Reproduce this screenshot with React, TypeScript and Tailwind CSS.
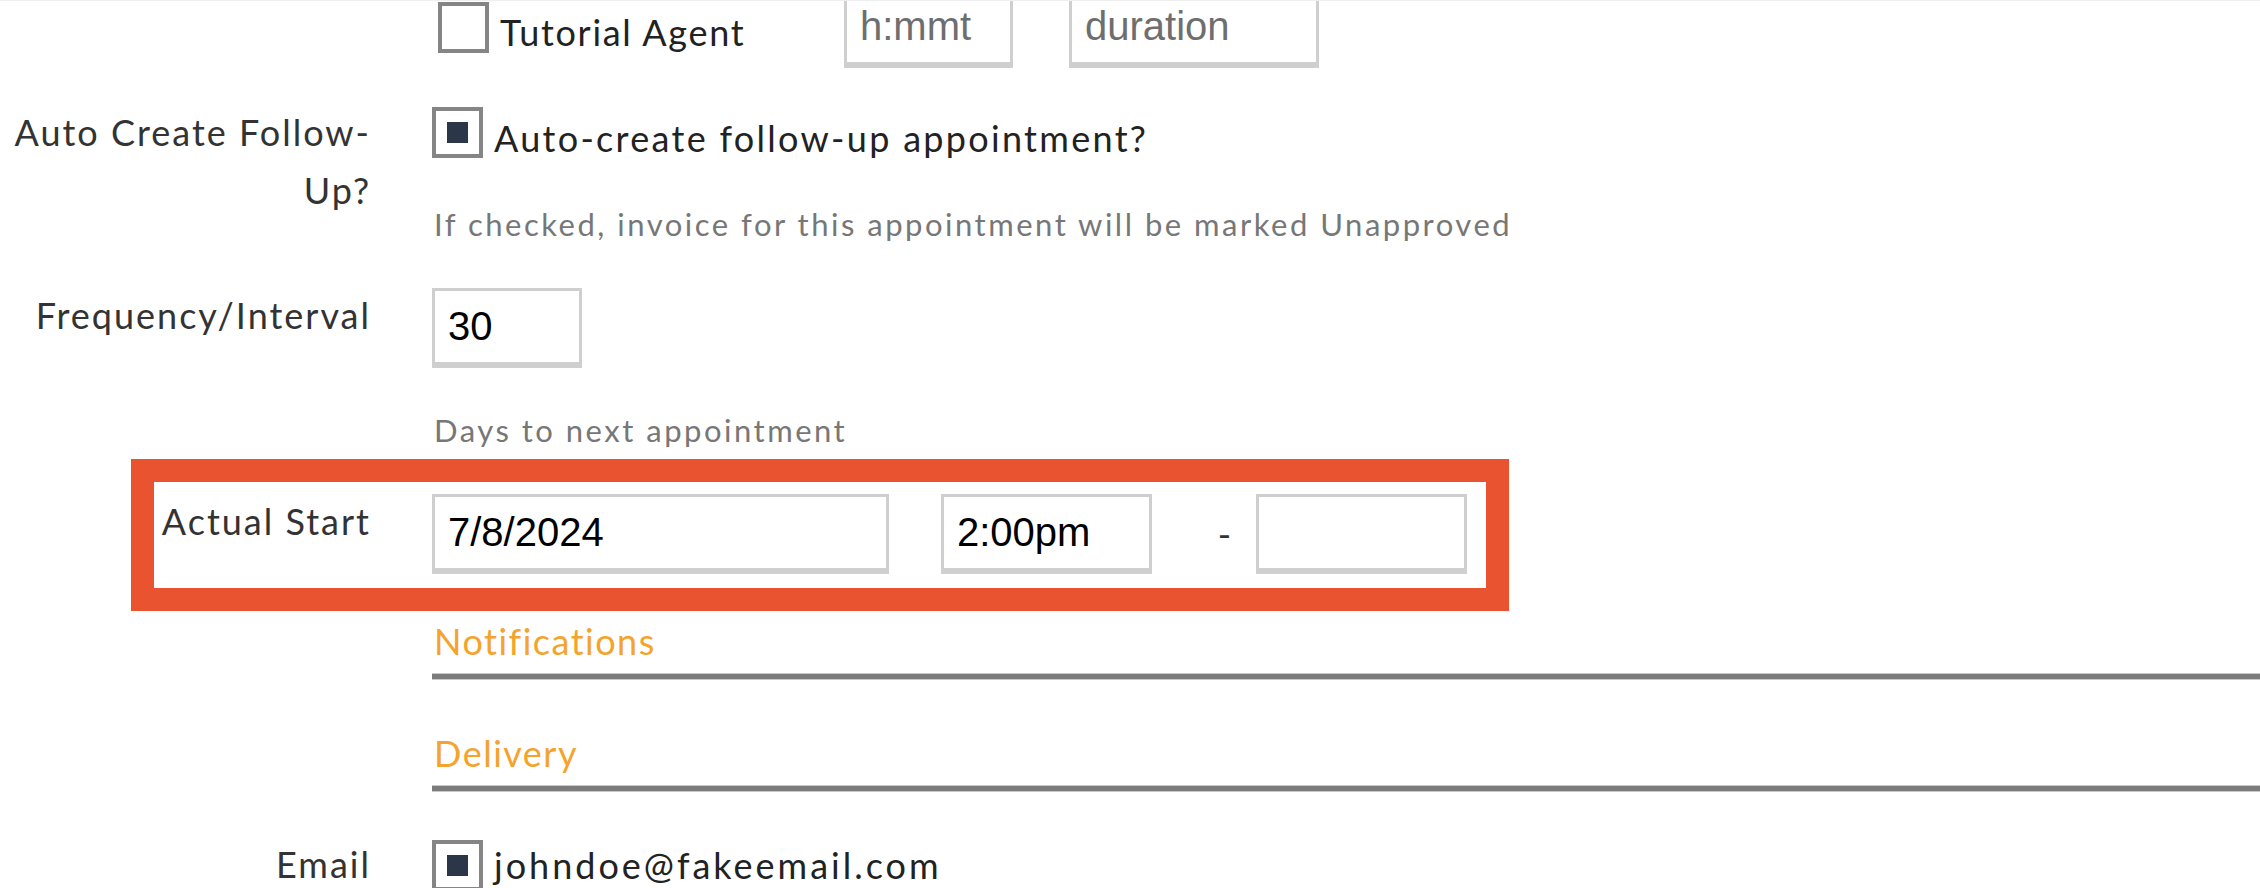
import React from 'react'

const label = 'text-right text-[36px] leading-[58px] tracking-[2px] text-[#333333] font-[Lato,sans-serif]'
const field =
  'h-[80px] border-[3px] border-b-[6px] border-[#cfcfcf] bg-white pl-[13px] text-[40px] text-black outline-none font-["Liberation_Sans",Arial,sans-serif] placeholder:text-[#6e6e6e]'
const help = 'pl-[2px] text-[31px] leading-[40px] tracking-[2.5px] text-[#777777]'

function Checkbox({ checked }: { checked?: boolean }) {
  return (
    <div className="flex size-[51px] shrink-0 items-center justify-center border-[4px] border-[#858585] bg-white">
      {checked && <div className="size-[21px] bg-[#2b3648]" />}
    </div>
  )
}

function Section({ title }: { title: string }) {
  return (
    <div className="ml-[432px]">
      <div className="pl-[2px] text-[36px] leading-[58px] tracking-[1.5px] text-[#f4a32c] font-[Lato,sans-serif]">
        {title}
      </div>
      <div className="mt-[3px] h-[7px] border-y border-[#c9c9c9] bg-[#7b7b7b]" />
    </div>
  )
}

export default function App() {
  return (
    <div className="h-[888px] w-[2260px] overflow-hidden border-t border-[#efefef] bg-white font-[Lato,sans-serif]">
      {/* Tutorial agent row */}
      <div className="-mt-[13px] flex h-[112px] items-start pl-[432px]">
        <div className="flex w-[412px] items-start">
          <div className="ml-[6px] mt-[14px]">
            <Checkbox />
          </div>
          <span className="ml-[11px] mt-[15px] text-[36px] leading-[58px] tracking-[1.7px] text-[#222222]">
            Tutorial Agent
          </span>
        </div>
        <input className={`${field} w-[169px]`} placeholder="h:mmt" readOnly />
        <input className={`${field} ml-[56px] w-[250px]`} placeholder="duration" readOnly />
      </div>

      {/* Auto create follow-up */}
      <div className="flex h-[186px] items-start">
        <div className={`${label} mt-[3px] w-[371px] shrink-0`}>
          Auto Create Follow-
          <br />
          Up?
        </div>
        <div className="ml-[61px] flex flex-col">
          <div className="flex h-[104px] items-start">
            <div className="mt-[7px]">
              <Checkbox checked />
            </div>
            <span className="ml-[11px] mt-[9px] text-[36px] leading-[58px] tracking-[2.3px] text-[#222222]">
              Auto-create follow-up appointment?
            </span>
          </div>
          <div className={help}>If checked, invoice for this appointment will be marked Unapproved</div>
        </div>
      </div>

      {/* Frequency */}
      <div className="flex h-[173px] items-start">
        <div className={`${label} w-[371px] shrink-0`}>Frequency/Interval</div>
        <div className="ml-[61px] flex flex-col">
          <input className={`${field} mt-[2px] w-[150px]`} value="30" readOnly />
          <div className={`${help} mt-[42px]`}>Days to next appointment</div>
        </div>
      </div>

      {/* Actual start, highlighted */}
      <div className="ml-[131px] h-[152px] w-[1378px] border-[23px] border-[#e9532f]">
        <div className="flex items-start">
          <div className={`${label} mt-[10px] w-[217px] shrink-0`}>Actual Start</div>
          <div className="ml-[61px] mt-[12px] flex items-center">
            <input className={`${field} w-[457px]`} value="7/8/2024" readOnly />
            <input className={`${field} ml-[52px] w-[211px]`} value="2:00pm" readOnly />
            <div className="flex w-[104px] justify-end pr-[25px] text-[36px] leading-[58px] text-[#333333]">
              -
            </div>
            <input className={`${field} w-[211px]`} readOnly />
          </div>
        </div>
      </div>

      <div className="mt-[1px]">
        <Section title="Notifications" />
      </div>
      <div className="mt-[44px]">
        <Section title="Delivery" />
      </div>

      {/* Email */}
      <div className="mt-[43px] flex items-start">
        <div className={`${label} w-[371px] shrink-0`}>Email</div>
        <div className="ml-[61px] flex items-start">
          <div className="mt-[5px]">
            <Checkbox checked />
          </div>
          <span className="ml-[11px] mt-[1px] text-[36px] leading-[58px] tracking-[3px] text-[#222222]">
            johndoe@fakeemail.com
          </span>
        </div>
      </div>
    </div>
  )
}
